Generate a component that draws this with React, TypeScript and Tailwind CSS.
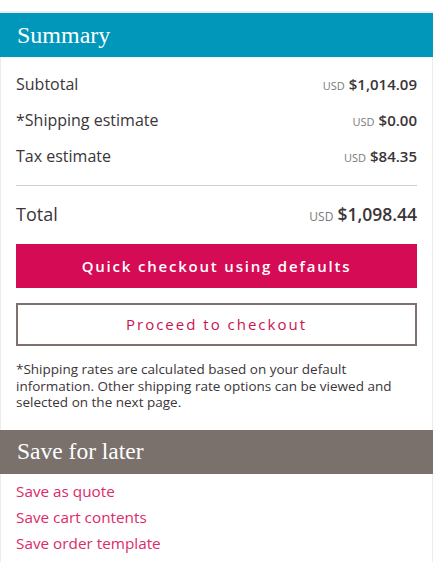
import React from "react";

const ROWS = [
  { label: "Subtotal", amount: "$1,014.09" },
  { label: "*Shipping estimate", amount: "$0.00" },
  { label: "Tax estimate", amount: "$84.35" },
];

const LINKS = ["Save as quote", "Save cart contents", "Save order template"];

const SERIF = { fontFamily: '"Liberation Serif", "DejaVu Serif", serif' };

function Amount({ value, big }: { value: string; big?: boolean }) {
  return (
    <span className="flex items-baseline gap-[4px]">
      <span className={big ? "text-[12px] text-[#7a7a7a]" : "text-[11px] text-[#7a7a7a]"}>USD</span>
      <span className={big ? "text-[17.5px] font-[560] text-[#3b3538]" : "text-[15px] font-[560] text-[#3b3538]"}>
        {value}
      </span>
    </span>
  );
}

export default function App() {
  return (
    <div className="w-[433px] bg-white pt-[11px]" style={{ fontFamily: '"Open Sans", "Noto Sans", sans-serif' }}>
      <div className="border-t-2 border-x border-[#ececec]">
        {/* Summary header */}
        <div className="h-[44px] bg-[#0097bb] -mx-px pl-[17px] flex items-center">
          <h2 className="text-[24px] text-white" style={SERIF}>
            Summary
          </h2>
        </div>

        <div className="px-[15px] pt-[9px]">
          {ROWS.map((r) => (
            <div key={r.label} className="h-9 flex items-center justify-between">
              <span className="text-[16px] text-[#3b3538]">{r.label}</span>
              <Amount value={r.amount} />
            </div>
          ))}

          <div className="mt-[11px] h-px bg-[#cfcfcf]" />

          <div className="mt-[10px] h-9 flex items-center justify-between">
            <span className="text-[18px] text-[#3b3538]">Total</span>
            <Amount value="$1,098.44" big />
          </div>

          <button className="mt-3 w-full h-[44px] bg-[#d50b55] text-white text-[15px] font-semibold tracking-[1.8px]">
            Quick checkout using defaults
          </button>

          <button className="mt-[15px] w-full h-[43px] border-2 border-[#7d726d] text-[#c8144f] text-[15px] tracking-[2px]">
            Proceed to checkout
          </button>

          <p className="mt-[15px] mb-[19px] text-[13.5px] leading-[16.5px] text-[#3b3538]">
            *Shipping rates are calculated based on your default information. Other shipping rate options can be
            viewed and selected on the next page.
          </p>
        </div>

        {/* Save for later header */}
        <div className="h-[44px] bg-[#7b716c] -mx-px pl-[17px] flex items-center">
          <h2 className="text-[23.5px] text-white" style={SERIF}>
            Save for later
          </h2>
        </div>

        <ul className="px-[15px] pt-[4px] pb-[6px]">
          {LINKS.map((l) => (
            <li key={l} className="leading-[26px]">
              <a href="#" className="text-[15.3px] text-[#dc2a6a]">
                {l}
              </a>
            </li>
          ))}
        </ul>
      </div>
    </div>
  );
}
